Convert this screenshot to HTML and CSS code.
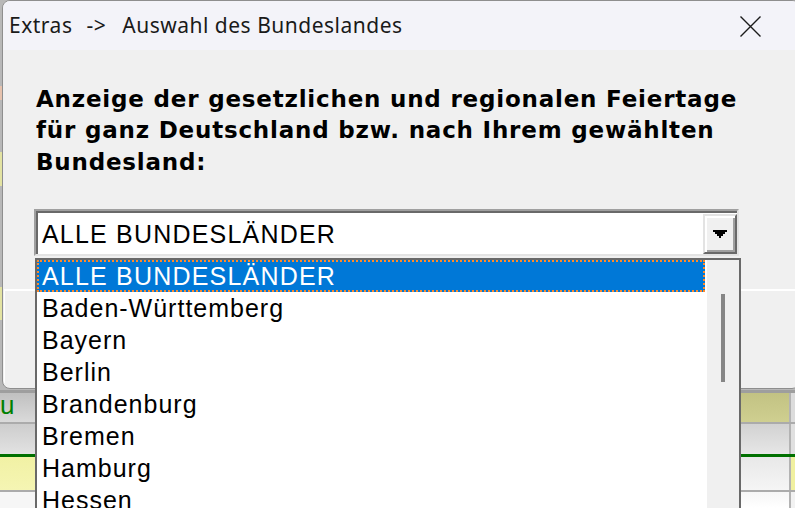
FILE: index.html
```
<!DOCTYPE html>
<html lang="de">
<head>
<meta charset="utf-8">
<title>Auswahl des Bundeslandes</title>
<link rel="stylesheet" href="styles.css">
</head>
<body>
<div class="desktop">
  <div class="app">
    <div class="app-top"></div>
    <div class="line line-top"></div>
    <div class="row r1">
      <div class="c-left"><span class="green-text">u</span></div>
      <div class="c-mid"></div>
      <div class="c-right"></div>
    </div>
    <div class="line line-gray"></div>
    <div class="row r2">
      <div class="c-left"></div>
      <div class="c-mid"></div>
      <div class="c-right"></div>
    </div>
    <div class="line line-green"></div>
    <div class="row r3">
      <div class="c-left"></div>
      <div class="c-mid"></div>
      <div class="c-right"></div>
    </div>
    <div class="line line-gray"></div>
    <div class="row r4">
      <div class="c-left"></div>
      <div class="c-mid"></div>
      <div class="c-right"></div>
    </div>
  </div>

  <div class="dialog">
    <div class="titlebar">
      <span class="title">Extras<span class="gap"></span>-&gt;<span class="gap gap2"></span>Auswahl des Bundeslandes</span>
      <span class="close">
        <svg width="21" height="21" viewBox="0 0 21 21"><path d="M0.5 0.5 L20.5 20.5 M20.5 0.5 L0.5 20.5" stroke="#1b1b1b" stroke-width="1.4" fill="none"/></svg>
      </span>
    </div>
    <div class="dlg-body">
      <div class="label">Anzeige der gesetzlichen und regionalen Feiertage<br>für ganz Deutschland bzw. nach Ihrem gewählten<br>Bundesland:</div>
      <div class="combo">
        <div class="field">
          <span class="field-text">ALLE BUNDESLÄNDER</span>
          <span class="drop-btn">
            <svg width="14" height="8" viewBox="0 0 14 8"><path d="M0 0H14V2H12V4H10V6H8V8H6V6H4V4H2V2H0Z" fill="#000"/></svg>
          </span>
        </div>
      </div>
      <div class="panel"></div>
    </div>
  </div>

  <div class="dropdown">
    <div class="items">
      <div class="item selected">ALLE BUNDESLÄNDER</div>
      <div class="item">Baden-Württemberg</div>
      <div class="item">Bayern</div>
      <div class="item">Berlin</div>
      <div class="item">Brandenburg</div>
      <div class="item">Bremen</div>
      <div class="item">Hamburg</div>
      <div class="item">Hessen</div>
    </div>
    <div class="scroll"><div class="thumb"></div></div>
  </div>
</div>
</body>
</html>
```
FILE: styles.css
```
html, body {
  margin: 0;
  padding: 0;
  background: #c8c8c8;
}

.desktop {
  position: relative;
  width: 795px;
  height: 508px;
  overflow: hidden;
  font-family: "Liberation Sans", Arial, sans-serif;
}

/* background application (calendar) */
.app {
  display: flex;
  flex-direction: column;
  height: 508px;
}
.app-top {
  height: 390px;
  flex: none;
  background: linear-gradient(to bottom,
    #b8b8b8 0 86px, #e6c2ad 86px 100px, #b8b8b8 100px 152px,
    #e3e3a2 152px 186px, #b8b8b8 186px 287px, #e3e3a2 287px 320px,
    #b8b8b8 320px);
}
.line { flex: none; }
.line-top { height: 3px; background: #9e9e9e; }
.line-gray { height: 2px; background: #ababab; }
.line-green { height: 3px; background: #007000; }

.row { display: flex; flex: none; }
.r1 { height: 29px; }
.r2 { height: 30px; }
.r3 { height: 33px; }
.r4 { height: 16px; }

.c-left { flex: 1; }
.c-mid { width: 48px; flex: none; }
.c-right { width: 4px; flex: none; border-left: 2px solid #b3b3b3; }

.r1 .c-left { background: linear-gradient(#c0c0c0, #dadada); }
.r1 .c-mid { background: linear-gradient(#c2c283, #cfcf90); }
.r1 .c-right { background: #dcdcdc; }
.r2 .c-left { background: linear-gradient(#cdcdcd, #e2e2e2); }
.r2 .c-mid { background: linear-gradient(#d2d2d2, #e6e6e6); }
.r2 .c-right { background: #e0e0e0; }
.r3 .c-left { background: linear-gradient(#f1f1a4, #f5f5b3); }
.r3 .c-mid { background: linear-gradient(#e8e8e8, #f5f5f5); }
.r3 .c-right { background: #f0f0a0; }
.r4 .c-left { background: #f6f6f6; }
.r4 .c-mid { background: linear-gradient(#f6f6f6, #ffffff); }
.r4 .c-right { background: #f2f2f2; }

.green-text {
  display: block;
  font-size: 26px;
  line-height: 24px;
  color: #008000;
}

/* dialog window */
.dialog {
  position: absolute;
  left: 2px;
  top: 0;
  width: 798px;
  height: 389px;
  box-sizing: border-box;
  border: 1px solid #8e8e8e;
  border-radius: 8px;
  background: #f0f0f0;
  overflow: hidden;
  display: flex;
  flex-direction: column;
}
.titlebar {
  height: 49px;
  flex: none;
  background: #f3f3f9;
  display: flex;
  align-items: center;
}
.title {
  font-family: "Noto Sans", "Open Sans", sans-serif;
  font-size: 21px;
  line-height: 49px;
  letter-spacing: 0.5px;
  color: #1a1a1a;
  white-space: nowrap;
  padding-left: 6px;
}
.gap {
  display: inline-block;
  width: 14px;
}
.gap2 { width: 16px; }
.close {
  margin-left: auto;
  margin-right: 38px;
  display: flex;
  padding-top: 1px;
}

.dlg-body {
  flex: 1;
  display: flex;
  flex-direction: column;
  padding-left: 31px;
}
.label {
  margin-top: 33.5px;
  padding-left: 2px;
  font-family: "DejaVu Sans", sans-serif;
  font-weight: bold;
  font-size: 23px;
  line-height: 31.7px;
  letter-spacing: 0.8px;
  color: #000;
  white-space: nowrap;
}

.combo {
  margin-top: 30.4px;
  width: 705px;
  height: 47px;
  box-sizing: border-box;
  border-style: solid;
  border-width: 2px;
  border-color: #a0a0a0 #e3e3e3 #e3e3e3 #a0a0a0;
}
.field {
  height: 43px;
  box-sizing: border-box;
  border-top: 2px solid #696969;
  border-left: 2px solid #696969;
  background: #fff;
  display: flex;
}
.field-text {
  padding-left: 4px;
  padding-top: 1px;
  font-size: 25px;
  line-height: 40px;
  letter-spacing: 1.2px;
  color: #000;
}
.drop-btn {
  margin-left: auto;
  align-self: flex-end;
  width: 34px;
  height: 40px;
  box-sizing: border-box;
  border-style: solid;
  border-width: 2px;
  border-color: #e3e3e3 #696969 #696969 #e3e3e3;
  box-shadow: inset 2px 2px 0 #ffffff, inset -2px -2px 0 #a0a0a0;
  background: #f0f0f0;
  display: flex;
  align-items: center;
  justify-content: center;
}

.panel {
  margin-top: 33px;
  margin-left: -30px;
  margin-bottom: 5px;
  flex: 1;
  border-top: 2px solid #ffffff;
  border-left: 1px solid #ffffff;
}

/* open list */
.dropdown {
  position: absolute;
  left: 35px;
  top: 258px;
  width: 706px;
  height: 270px;
  box-sizing: border-box;
  border: 2px solid #696969;
  background: #fff;
  display: flex;
}
.items {
  flex: 1;
  padding-right: 2px;
}
.item {
  height: 32px;
  box-sizing: border-box;
  padding-left: 5px;
  font-size: 25px;
  line-height: 32px;
  letter-spacing: 1px;
  color: #000;
  white-space: nowrap;
}
.item.selected {
  background: #0078d7;
  color: #fff;
  border: 2px dotted #ff8a2a;
  padding-left: 3px;
  line-height: 28px;
  letter-spacing: 1.2px;
}
.scroll {
  width: 32px;
  flex: none;
  background: #f0f0f0;
}
.thumb {
  margin-left: 14px;
  margin-top: 34px;
  width: 4px;
  height: 88px;
  background: #868686;
}
```
